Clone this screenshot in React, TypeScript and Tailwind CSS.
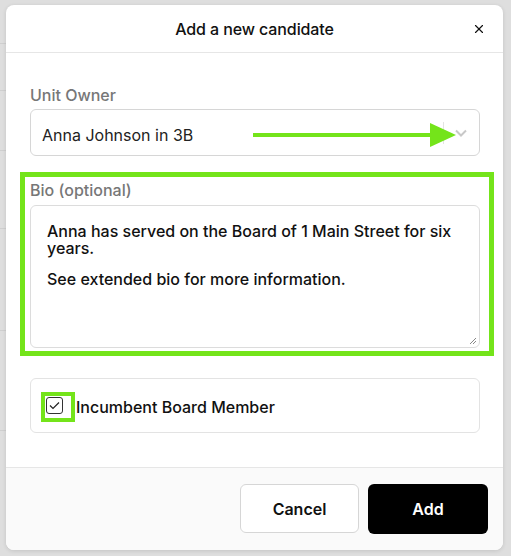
import { X } from "lucide-react";

/* faint page lines peeking out beside the modal */
const backdropLines = [43, 90, 150, 228, 330, 430];

export default function App() {
  return (
    <div
      className="relative w-[511px] h-[556px] overflow-hidden bg-[#dedede] pt-[5px] pl-[6px]"
      style={{ fontFamily: "Inter, 'Noto Sans', sans-serif" }}
    >
      {backdropLines.map((y) => (
        <div
          key={y}
          className="absolute left-0 w-[6px] h-px bg-[#cfcfcf]"
          style={{ top: y }}
        />
      ))}

      {/* MODAL */}
      <div className="relative w-[497px] h-[545px] rounded-lg bg-white shadow-[0_1px_4px_rgba(0,0,0,0.12)] flex flex-col overflow-hidden">
        {/* HEADER */}
        <header className="flex-none h-[48px] border-b border-[#e6e6e6] flex items-center justify-center relative">
          <h1 className="text-[16px] font-medium text-[#111] tracking-[-0.1px]">
            Add a new candidate
          </h1>
          <button className="absolute right-[17px] top-[17px] text-[#111]">
            <X className="w-[14px] h-[14px]" strokeWidth={2} />
          </button>
        </header>

        {/* BODY */}
        <main className="flex-1 px-[24px] pt-[32px]">
          <label className="block text-[16px] font-medium text-[#777] leading-[20px] mb-[4px]">
            Unit Owner
          </label>

          <div className="relative h-[47px] w-[450px] rounded-md border border-[#d6d6d6] flex items-center pl-[11px]">
            <span className="text-[16px] text-[#222] pt-[4px]">Anna Johnson in 3B</span>
            <div className="absolute left-[412px] top-[12px] w-px h-[22px] bg-[#e3e3e3]" />
            <svg
              className="absolute left-[424px] top-[19px]"
              width="12"
              height="8"
              viewBox="0 0 12 8"
              fill="none"
            >
              <path d="M1 1.5 6 6.5 11 1.5" stroke="#c8c8c8" strokeWidth="2" />
            </svg>
            {/* annotation arrow */}
            <svg
              className="absolute left-[222px] top-[12px]"
              width="204"
              height="26"
              viewBox="0 0 204 26"
            >
              <rect x="0" y="11" width="182" height="4" fill="#74e41a" />
              <path d="M177 1 203 13 177 25Z" fill="#74e41a" />
            </svg>
          </div>

          {/* BIO */}
          <div className="relative mt-[24px]">
            <div className="absolute -left-[10px] -top-[8px] w-[474px] h-[184px] border-[5px] border-[#74e41a] pointer-events-none" />
            <label className="block text-[16px] font-medium text-[#777] leading-[20px] mb-[5px]">
              Bio (optional)
            </label>
            <div className="relative h-[143px] w-[450px] rounded-md border border-[#dcdcdc] pl-[16px] pr-[18px] pt-[17px]">
              <p className="text-[16px] font-medium text-[#111] leading-[17px]">
                Anna has served on the Board of 1 Main Street for six years.
              </p>
              <p className="text-[16px] font-medium text-[#111] leading-[17px] mt-[14px]">
                See extended bio for more information.
              </p>
              <svg
                className="absolute right-[2px] bottom-[2px]"
                width="8"
                height="8"
                viewBox="0 0 8 8"
              >
                <path d="M7 1 1 7M7 4 4 7" stroke="#888" strokeWidth="1" />
              </svg>
            </div>
          </div>

          {/* INCUMBENT */}
          <div className="mt-[30px] h-[55px] w-[450px] rounded-md border border-[#e3e3e3] flex items-center pl-[15px]">
            <div className="relative w-[17px] h-[17px] rounded-[3px] border border-[#333] flex items-center justify-center">
              <div className="absolute -left-[6px] -top-[6px] w-[34px] h-[30px] border-[4px] border-[#74e41a]" />
              <svg width="11" height="9" viewBox="0 0 11 9" fill="none">
                <path d="M1 4.5 4 7.5 10 1.5" stroke="#222" strokeWidth="1.2" />
              </svg>
            </div>
            <span className="ml-[13px] text-[16px] font-medium text-[#111] pt-[2px]">
              Incumbent Board Member
            </span>
          </div>
        </main>

        {/* FOOTER */}
        <footer className="flex-none h-[83px] border-t border-[#e6e6e6] bg-[#fafafa] flex justify-end items-start pt-[16px] pr-[15px] gap-[9px]">
          <button className="w-[119px] h-[49px] rounded-md border border-[#d6d6d6] bg-white text-[16px] font-semibold text-[#111]">
            Cancel
          </button>
          <button className="w-[120px] h-[50px] rounded-md bg-black text-[16px] font-semibold text-white">
            Add
          </button>
        </footer>
      </div>
    </div>
  );
}
